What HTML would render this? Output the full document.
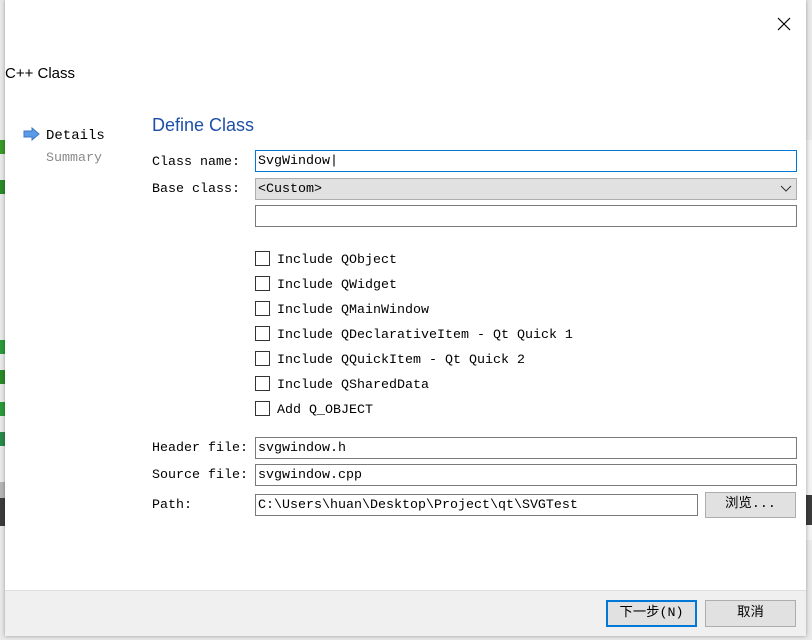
<!DOCTYPE html>
<html><head><meta charset="utf-8"><style>
*{margin:0;padding:0;box-sizing:border-box}
body{width:812px;height:640px;background:#e9e9e9;position:relative;overflow:hidden;font-family:"Liberation Mono","Noto Sans CJK SC",monospace;font-size:13.33px;color:#000}
.a{position:absolute}
.dlg{left:5px;top:0;width:801px;height:636px;background:#fff;box-shadow:0 0 4px rgba(0,0,0,.35)}
.lbl{position:absolute;line-height:16px;white-space:pre}
.in{position:absolute;border:1px solid #7a7a7a;background:#fff;height:22px;padding-left:2px;padding-top:1px;line-height:20px;white-space:pre}
.cb{position:absolute;left:255px;width:15px;height:15px;border:1px solid #333;background:#fff}
.ct{position:absolute;left:277px;line-height:16px;white-space:pre}
.btn{position:absolute;background:#e1e1e1;border:1px solid #adadad;text-align:center;font-family:"Liberation Mono","Noto Sans CJK SC",monospace}
.sans{font-family:"Liberation Sans","Noto Sans CJK SC",sans-serif}
</style></head><body>
<div class="a" style="left:0;top:140px;width:5px;height:14px;background:#3a9a2a"></div>
<div class="a" style="left:0;top:180px;width:5px;height:14px;background:#2a8a2a"></div>
<div class="a" style="left:0;top:340px;width:5px;height:14px;background:#2a9a3a"></div>
<div class="a" style="left:0;top:370px;width:5px;height:14px;background:#2a8a2a"></div>
<div class="a" style="left:0;top:402px;width:5px;height:14px;background:#2a9a3a"></div>
<div class="a" style="left:0;top:432px;width:5px;height:14px;background:#2a8a4a"></div>
<div class="a" style="left:0;top:482px;width:5px;height:16px;background:#b5b5b5"></div>
<div class="a" style="left:0;top:498px;width:5px;height:28px;background:#3c3c3c"></div>
<div class="a" style="left:806px;top:140px;width:6px;height:400px;background:#f2f2f2"></div>
<div class="a" style="left:806px;top:495px;width:6px;height:30px;background:#3c3c3c"></div>
<div class="a dlg">
</div>
<svg class="a" style="left:777px;top:17px" width="14" height="14"><path d="M1 1L13 13M13 1L1 13" stroke="#000" stroke-width="1.2"/></svg>
<div class="a sans" style="left:5px;top:65px;font-size:15px;line-height:18px">C++ Class</div>
<svg class="a" style="left:23px;top:127px" width="18" height="14"><path d="M1 4H9V1L16 7L9 13V10H1Z" fill="#5b9ae6" stroke="#3a78c8" stroke-width="1"/></svg>
<div class="lbl" style="left:46px;top:128px;font-size:14px">Details</div>
<div class="lbl" style="left:46px;top:151px;color:#8a8a8a">Summary</div>
<div class="a sans" style="left:152px;top:114px;font-size:18px;color:#1e4fa8;line-height:22px">Define Class</div>
<div class="lbl" style="left:152px;top:155px">Class name:</div>
<div class="in" style="left:255px;top:150px;width:542px;border-color:#0078d7">SvgWindow|</div>
<div class="lbl" style="left:152px;top:182px">Base class:</div>
<div class="in" style="left:255px;top:178px;width:542px;background:#e1e1e1;border-color:#adadad">&lt;Custom&gt;</div>
<svg class="a" style="left:780px;top:185px" width="12" height="8"><path d="M1 1L6 6L11 1" stroke="#333" fill="none"/></svg>
<div class="in" style="left:255px;top:205px;width:542px"></div>
<div class="cb" style="top:251px"></div><div class="ct" style="top:253px">Include QObject</div>
<div class="cb" style="top:276px"></div><div class="ct" style="top:278px">Include QWidget</div>
<div class="cb" style="top:301px"></div><div class="ct" style="top:303px">Include QMainWindow</div>
<div class="cb" style="top:326px"></div><div class="ct" style="top:328px">Include QDeclarativeItem - Qt Quick 1</div>
<div class="cb" style="top:351px"></div><div class="ct" style="top:353px">Include QQuickItem - Qt Quick 2</div>
<div class="cb" style="top:376px"></div><div class="ct" style="top:378px">Include QSharedData</div>
<div class="cb" style="top:401px"></div><div class="ct" style="top:403px">Add Q_OBJECT</div>
<div class="lbl" style="left:152px;top:441px">Header file:</div>
<div class="in" style="left:255px;top:437px;width:542px">svgwindow.h</div>
<div class="lbl" style="left:152px;top:468px">Source file:</div>
<div class="in" style="left:255px;top:464px;width:542px">svgwindow.cpp</div>
<div class="lbl" style="left:152px;top:498px">Path:</div>
<div class="in" style="left:255px;top:494px;width:443px">C:\Users\huan\Desktop\Project\qt\SVGTest</div>
<div class="btn" style="left:705px;top:492px;width:91px;height:26px;line-height:24px">浏览...</div>
<div class="a" style="left:5px;top:590px;width:801px;height:46px;background:#f0f0f0;border-top:1px solid #dfdfdf"></div>
<div class="btn" style="left:606px;top:600px;width:91px;height:27px;line-height:23px;border:2px solid #0078d7">下一步(N)</div>
<div class="btn" style="left:705px;top:600px;width:91px;height:27px;line-height:25px">取消</div>
</body></html>
